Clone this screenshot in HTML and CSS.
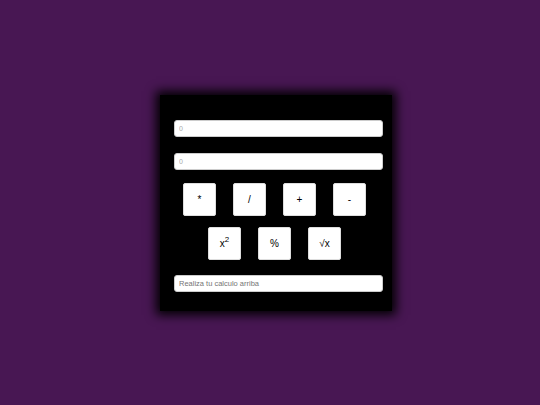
FILE: index.html
```html
<!DOCTYPE html>
<html>
<head>
<meta charset="utf-8">
<link rel="stylesheet" href="styles.css">
</head>
<body>
<div class="page">
  <div class="calc">
    <input class="field" type="text" placeholder="0">
    <input class="field second" type="text" placeholder="0">
    <div class="row row1">
      <button class="btn">*</button>
      <button class="btn">/</button>
      <button class="btn">+</button>
      <button class="btn">-</button>
    </div>
    <div class="row row2">
      <button class="btn">x<sup>2</sup></button>
      <button class="btn">%</button>
      <button class="btn">√x</button>
    </div>
    <input class="field result" type="text" placeholder="Realiza tu calculo arriba">
  </div>
</div>
</body>
</html>
```
FILE: styles.css
```css
html, body {
  margin: 0;
  padding: 0;
  background: #481753;
  font-family: "Liberation Sans", Arial, sans-serif;
}
.page {
  width: 540px;
  height: 405px;
  display: flex;
  justify-content: flex-start;
  align-items: flex-start;
  padding: 95px 0 0 160px;
  box-sizing: border-box;
}
.calc {
  width: 232px;
  height: 216px;
  background: #000;
  box-shadow: 0 0 10px 4px #000;
  box-sizing: border-box;
  padding: 25px 0 0 14px;
  display: flex;
  flex-direction: column;
  align-items: flex-start;
}
.field {
  width: 209px;
  height: 17px;
  box-sizing: border-box;
  border: 1px solid #ccc;
  border-radius: 3px;
  background: #fff;
  padding: 0 4px;
  font-family: "Liberation Sans", Arial, sans-serif;
  font-size: 7px;
  outline: none;
  margin: 0;
}
.field::placeholder { color: #aaa; }
.second { margin-top: 16px; }
.result { margin-top: 15px; font-size: 7.5px; }
.result::placeholder { color: #757575; }
.row {
  display: flex;
  gap: 17px;
}
.row1 { margin-top: 13px; margin-left: 9px; }
.row2 { margin-top: 11px; margin-left: 34px; }
.btn {
  width: 33px;
  height: 33px;
  background: #fff;
  border: 1px solid #ddd;
  border-radius: 2px;
  font-family: "Liberation Sans", Arial, sans-serif;
  font-size: 10px;
  color: #000;
  padding: 0;
  display: flex;
  align-items: center;
  justify-content: center;
}
.btn sup {
  font-size: 8px;
  position: relative;
  top: -4px;
  vertical-align: baseline;
  line-height: 0;
}
```
